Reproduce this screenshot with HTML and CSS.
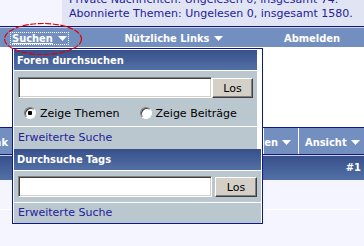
FILE: index.html
```html
<!DOCTYPE html>
<html lang="de">
<head>
  <meta charset="UTF-8" />
  <title>Forum | Suche</title>
  <link rel="stylesheet" href="styles.css">
</head>
<body>

  <div class="page">
    <div class="userbar">
      <div class="userbar-side"></div>
      <div class="userbar-info">
        <div class="info-lines">
          <div><a href="#">Private Nachrichten</a>: Ungelesen 0, insgesamt 74.</div>
          <div><a href="#">Abonnierte Themen</a>: Ungelesen 0, insgesamt 1580.</div>
        </div>
      </div>
    </div>

    <div class="navbar">
      <div class="nav-cell nav-search">
        <a class="nav-link is-open" href="#"><span class="nav-text">Suchen</span>
          <svg class="arrow" width="9" height="5" viewBox="0 0 9 5"><polygon points="0,0 9,0 4.5,5" fill="#fff"/></svg>
        </a>
      </div>
      <div class="nav-cell">
        <a class="nav-link" href="#">Nützliche Links
          <svg class="arrow" width="9" height="5" viewBox="0 0 9 5"><polygon points="0,0 9,0 4.5,5" fill="#fff"/></svg>
        </a>
      </div>
      <div class="nav-cell">
        <a class="nav-link" href="#">Abmelden</a>
      </div>
    </div>

    <div class="spacer"></div>

    <div class="toolbar">
      <div class="tool tool-clip"><span>Link</span></div>
      <div class="tool tool-fill"></div>
      <div class="tool tool-right"><span>Thema bewerten</span>
        <svg class="arrow" width="9" height="5" viewBox="0 0 9 5"><polygon points="0,0 9,0 4.5,5" fill="#fff"/></svg>
      </div>
      <div class="tool tool-view">Ansicht
        <svg class="arrow" width="9" height="5" viewBox="0 0 9 5"><polygon points="0,0 9,0 4.5,5" fill="#fff"/></svg>
      </div>
    </div>

    <div class="post-head">#1</div>
    <div class="post-body">
      <div class="post-rule"></div>
    </div>

    <!-- dropdown of "Suchen" -->
    <div class="menu">
      <div class="menu-group group-forums">
        <div class="menu-head">Foren durchsuchen</div>
        <div class="menu-body body-forums">
          <div class="search-row">
            <input class="search-input" type="text" />
            <button class="search-btn" type="button">Los</button>
          </div>
          <div class="radio-row">
            <input class="radio" type="radio" name="show" checked />
            <span>Zeige Themen</span>
            <input class="radio radio-second" type="radio" name="show" />
            <span>Zeige Beiträge</span>
          </div>
        </div>
        <div class="menu-link"><a href="#">Erweiterte Suche</a></div>
      </div>
      <div class="menu-group group-tags">
        <div class="menu-head">Durchsuche Tags</div>
        <div class="menu-body body-tags">
          <div class="search-row">
            <input class="search-input" type="text" />
            <button class="search-btn" type="button">Los</button>
          </div>
        </div>
        <div class="menu-link"><a href="#">Erweiterte Suche</a></div>
      </div>
    </div>

    <svg class="marker" width="82" height="35" viewBox="0 0 82 35">
      <ellipse cx="41" cy="17" rx="38.5" ry="15.5" fill="none" stroke="#e00000" stroke-width="1.2" stroke-dasharray="6 1.5"/>
    </svg>
  </div>

</body>
</html>
```

FILE: styles.css
```css
body {
  margin: 0;
  padding: 0;
  font-family: "DejaVu Sans", Verdana, sans-serif;
  font-size: 11px;
  color: #000;
  background: #F5F5FF;
  overflow: hidden;
}
a {
  color: #22229C;
  text-decoration: none;
}
.page {
  position: relative;
  width: 364px;
  height: 246px;
  overflow: hidden;
}

/* user info strip */
.userbar {
  display: flex;
  height: 26px;
}
.userbar-side {
  width: 62px;
  background: #F5F5FF;
}
.userbar-info {
  flex: 1;
  background: #E1E4F2;
  overflow: hidden;
  color: #22229C;
  white-space: nowrap;
}
.info-lines {
  margin-top: -7px;
  padding-left: 7px;
  line-height: 14px;
}

/* main navbar */
.navbar {
  display: grid;
  grid-template-columns: 88px 172px 1fr;
  height: 18px;
  padding-top: 2px;
  border-top: 1px solid #0B198C;
  background: #738FBF;
  box-shadow: inset 0 1px 0 #D1D1E1;
  font-family: "DejaVu Sans Condensed", "DejaVu Sans", sans-serif;
  font-stretch: condensed;
  font-weight: bold;
}
.nav-cell {
  display: flex;
  align-items: center;
  justify-content: center;
}
.nav-search {
  justify-content: flex-start;
  padding-left: 11px;
}
.nav-link {
  display: inline-flex;
  align-items: center;
  gap: 5px;
  color: #fff;
  line-height: 11px;
}
.nav-link.is-open {
  padding: 0 1px;
  outline: 1px dotted #fff;
}
.nav-text {
  text-decoration: underline;
}
.arrow {
  display: block;
  flex: none;
}

.spacer {
  height: 80px;
  background: #fff;
}

/* thread toolbar */
.toolbar {
  display: flex;
  height: 23px;
  padding-top: 3px;
  border-top: 1px solid #0B198C;
  border-bottom: 1px solid #0B198C;
  background: #738FBF;
  box-shadow: 0 1px 0 #D1D1E1;
  color: #fff;
  font-family: "DejaVu Sans Condensed", "DejaVu Sans", sans-serif;
  font-stretch: condensed;
  font-weight: bold;
  white-space: nowrap;
}
.tool {
  display: flex;
  align-items: center;
  gap: 4px;
  margin-top: -3px;
  padding-top: 3px;
}
.tool + .tool {
  border-left: 1px solid #fff;
}
.tool-clip {
  width: 8px;
  padding-right: 6px;
  justify-content: flex-end;
  overflow: hidden;
}
.tool-fill {
  width: 248px;
}
.tool-right {
  flex: 1;
  min-width: 0;
  justify-content: flex-end;
  padding-right: 7px;
  overflow: hidden;
}
.tool-view {
  width: 59px;
  padding-left: 6px;
}

.post-head {
  height: 22px;
  margin-top: 1px;
  padding: 2px 3px 0 0;
  text-align: right;
  line-height: 20px;
  color: #fff;
  background: linear-gradient(#38508A, #5270A6);
  font-family: "DejaVu Sans Condensed", "DejaVu Sans", sans-serif;
  font-stretch: condensed;
  font-weight: bold;
}
.post-body {
  padding-top: 29px;
  height: 37px;
}
.post-rule {
  width: 361px;
  height: 1px;
  background: #fff;
}

/* dropdown */
.menu {
  position: absolute;
  top: 48px;
  left: 12px;
  width: 249px;
  border: 1px solid #0B198C;
  background: #fff;
}
.menu-group {
  display: flex;
  flex-direction: column;
  gap: 1px;
}
.group-forums {
  margin: 1px 5px 0 1px;
}
.group-tags {
  margin: 0 1px;
}
.menu-head {
  height: 20px;
  padding-left: 3px;
  line-height: 21px;
  color: #fff;
  background: linear-gradient(#38508A, #5270A6);
  font-family: "DejaVu Sans Condensed", "DejaVu Sans", sans-serif;
  font-stretch: condensed;
  font-weight: bold;
}
.group-tags .menu-head {
  height: 21px;
}
.menu-body {
  background: #BBC7CE;
  padding: 6px 4px 5px 4px;
}
.body-tags {
  padding: 5px 4px;
}
.search-row {
  display: flex;
  align-items: flex-end;
}
.group-tags .search-row {
  gap: 3px;
}
.search-input {
  width: 194px;
  height: 21px;
  margin: 0;
  padding: 0 3px;
  box-sizing: border-box;
  border: 1px solid;
  border-color: #808080 #fff #fff #808080;
  box-shadow: inset 1px 1px 0 #404040, inset -1px -1px 0 #D4D0C8;
  background: #fff;
  outline: none;
}
.search-btn {
  width: 41px;
  height: 20px;
  margin: 0;
  padding: 0;
  border: 1px solid;
  border-color: #fff #404040 #404040 #fff;
  box-shadow: inset -1px -1px 0 #808080;
  background: #D4D0C8;
  font-family: "DejaVu Sans", Verdana, sans-serif;
  font-size: 11px;
  color: #000;
}
.group-tags .search-btn {
  width: 42px;
}
.radio-row {
  display: flex;
  align-items: center;
  gap: 4px;
  height: 16px;
  margin-top: 7px;
  padding-left: 6px;
}
.radio {
  appearance: none;
  width: 12px;
  height: 12px;
  margin: 0;
  box-sizing: border-box;
  border-radius: 50%;
  border: 1px solid;
  border-color: #808080 #fff #fff #808080;
  box-shadow: inset 1px 1px 0 #404040;
  background: #fff;
}
.radio:checked {
  background: radial-gradient(circle, #000 0 2px, #fff 2.5px);
}
.radio-second {
  margin-left: 16px;
}
.menu-link {
  height: 22px;
  padding-left: 4px;
  line-height: 22px;
  background: #BBC7CE;
}
.group-tags .menu-link {
  height: 20px;
  line-height: 20px;
}

/* red annotation around the menu trigger */
.marker {
  position: absolute;
  top: 22px;
  left: 2px;
}
```
